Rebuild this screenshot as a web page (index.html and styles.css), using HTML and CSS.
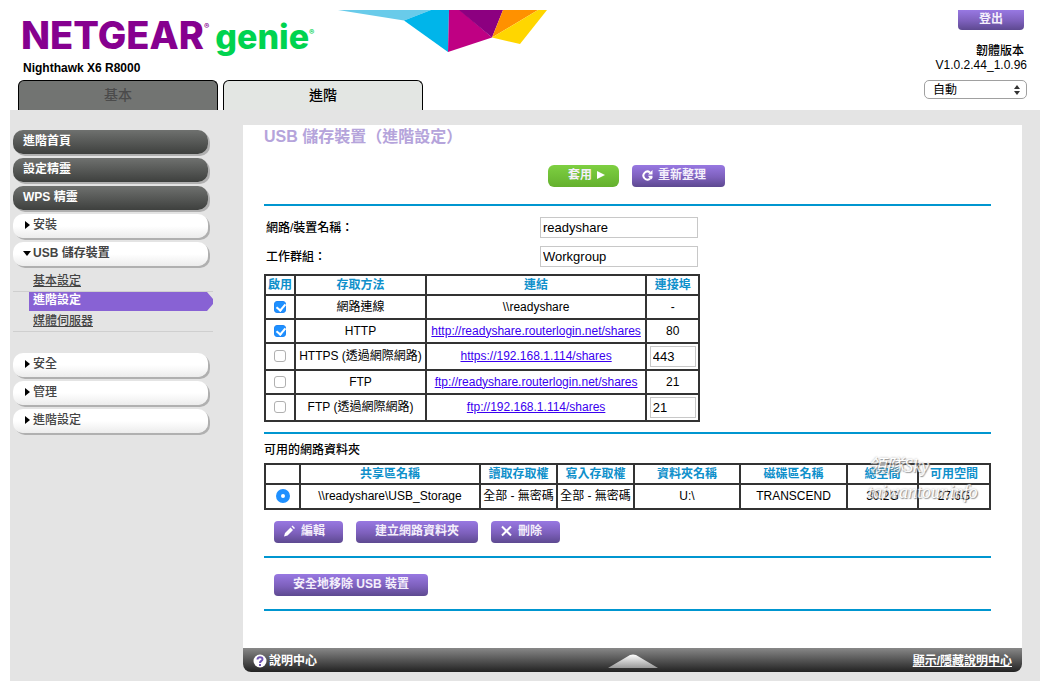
FILE: index.html
```html
<!DOCTYPE html>
<html lang="zh-Hant">
<head>
<meta charset="utf-8">
<title>NETGEAR genie - Nighthawk X6 R8000</title>
<link rel="stylesheet" href="styles.css">
</head>
<body>
<header class="top">
  <div class="top-left">
    <div class="brand-row">
      <div class="brand">
        <span class="brand-name">NETGEAR<sup>®</sup></span>
        <span class="brand-sub">genie<sup>®</sup></span>
      </div>
      <svg class="ribbon" width="210" height="42" viewBox="0 0 210 42" aria-hidden="true">
        <path fill="#69cbea" d="M0 0H93L66 10.500Z"/>
        <path fill="#00b5ea" d="M93 0H111L110 42L66 10.500Z"/>
        <path fill="#bf0083" d="M111 0H122L154 27.500L110 42Z"/>
        <path fill="#8c0080" d="M121 0H165L154 27.500Z"/>
        <path fill="#ff9100" d="M165 0H200L154 27.500Z"/>
        <path fill="#ffd600" d="M200 0H209L182 34L154 27.500Z"/>
      </svg>
    </div>
    <div class="model">Nighthawk X6 R8000</div>
    <nav class="tabs">
      <button type="button" class="tab">基本</button>
      <button type="button" class="tab tab-active">進階</button>
    </nav>
  </div>
  <div class="top-right">
    <button type="button" class="btn btn-logout">登出</button>
    <div class="firmware"><span class="firmware-label">韌體版本</span><span>V1.0.2.44_1.0.96</span></div>
    <div class="select-wrap">
      <select class="language" aria-label="語言"><option>自動</option></select>
      <svg class="select-arrows" width="6" height="10" viewBox="0 0 6 10" aria-hidden="true"><path fill="#333" d="M3 0L6 4H0ZM0 6H6L3 10Z"/></svg>
    </div>
  </div>
</header>
<div class="body">
  <nav class="side">
    <button type="button" class="item item-dark">進階首頁</button>
    <button type="button" class="item item-dark">設定精靈</button>
    <button type="button" class="item item-dark">WPS 精靈</button>
    <button type="button" class="item"><svg class="caret" width="8" height="8" viewBox="0 0 8 8"><path d="M2 0L7 4L2 8Z"/></svg>安裝</button>
    <button type="button" class="item item-open"><svg class="caret" width="8" height="8" viewBox="0 0 8 8"><path d="M0 2H8L4 7Z"/></svg>USB 儲存裝置</button>
    <ul class="sub">
      <li class="sub-item"><a href="#basic">基本設定</a></li>
      <li class="sub-item sub-active"><a href="#advanced">進階設定</a></li>
      <li class="sub-item"><a href="#media">媒體伺服器</a></li>
    </ul>
    <button type="button" class="item"><svg class="caret" width="8" height="8" viewBox="0 0 8 8"><path d="M2 0L7 4L2 8Z"/></svg>安全</button>
    <button type="button" class="item"><svg class="caret" width="8" height="8" viewBox="0 0 8 8"><path d="M2 0L7 4L2 8Z"/></svg>管理</button>
    <button type="button" class="item"><svg class="caret" width="8" height="8" viewBox="0 0 8 8"><path d="M2 0L7 4L2 8Z"/></svg>進階設定</button>
  </nav>
  <main class="panel">
    <div class="content">
      <h1 class="title">USB 儲存裝置（進階設定）</h1>
      <div class="actions">
        <button type="button" class="btn btn-apply">套用<svg width="8" height="8" viewBox="0 0 8 8" aria-hidden="true"><path fill="#fff" d="M0 0L8 4L0 8Z"/></svg></button>
        <button type="button" class="btn btn-icon btn-refresh"><svg width="11" height="11" viewBox="0 0 11 11" aria-hidden="true"><path fill="none" stroke="#fff" stroke-width="2" d="M8 2.500A4 4 0 1 0 8 8.700"/><path fill="#fff" d="M10.500 0V4.500H6ZM6 5.800H10.500V8L9 9.500L7.500 8Z"/></svg>重新整理</button>
      </div>
      <section class="section">
        <div class="field"><label for="device">網路/裝置名稱：</label><input id="device" class="text" type="text" value="readyshare"></div>
        <div class="field"><label for="group">工作群組：</label><input id="group" class="text" type="text" value="Workgroup"></div>
        <table class="grid access">
          <colgroup><col class="c-on"><col class="c-method"><col><col class="c-port"></colgroup>
          <thead><tr><th>啟用</th><th>存取方法</th><th>連結</th><th>連接埠</th></tr></thead>
          <tbody>
            <tr><td><input type="checkbox" aria-label="網路連線" checked></td><td>網路連線</td><td>\\readyshare</td><td>-</td></tr>
            <tr><td><input type="checkbox" aria-label="HTTP" checked></td><td>HTTP</td><td><a href="#http">http://readyshare.routerlogin.net/shares</a></td><td>80</td></tr>
            <tr class="tall"><td><input type="checkbox" aria-label="HTTPS"></td><td>HTTPS (透過網際網路)</td><td><a href="#https">https://192.168.1.114/shares</a></td><td><input class="text port" type="text" aria-label="HTTPS 連接埠" value="443"></td></tr>
            <tr><td><input type="checkbox" aria-label="FTP"></td><td>FTP</td><td><a href="#ftp">ftp://readyshare.routerlogin.net/shares</a></td><td>21</td></tr>
            <tr class="tall"><td><input type="checkbox" aria-label="FTP 透過網際網路"></td><td>FTP (透過網際網路)</td><td><a href="#ftp-wan">ftp://192.168.1.114/shares</a></td><td><input class="text port" type="text" aria-label="FTP 連接埠" value="21"></td></tr>
          </tbody>
        </table>
      </section>
      <section class="section folders">
        <h2 class="subtitle">可用的網路資料夾</h2>
        <div class="folder-table">
          <table class="grid">
            <colgroup><col class="c-pick"><col><col class="c-perm"><col class="c-perm"><col class="c-name"><col class="c-volume"><col class="c-total"><col class="c-free"></colgroup>
            <thead><tr><th></th><th>共享區名稱</th><th>讀取存取權</th><th>寫入存取權</th><th>資料夾名稱</th><th>磁碟區名稱</th><th>總空間</th><th>可用空間</th></tr></thead>
            <tbody><tr class="share"><td><input type="radio" name="share" aria-label="USB_Storage" checked></td><td>\\readyshare\USB_Storage</td><td>全部 - 無密碼</td><td>全部 - 無密碼</td><td>U:\</td><td>TRANSCEND</td><td>30.2G</td><td>27.6G</td></tr></tbody>
          </table>
          <div class="stamp"><span>領隊Sky</span><span>taiwantour.info</span></div>
        </div>
        <div class="buttons">
          <button type="button" class="btn btn-icon btn-small"><svg width="12" height="12" viewBox="0 0 12 12" aria-hidden="true"><path fill="#fff" d="M0 11.500L1 8L6.500 2.500L9 5L3.500 10.500ZM7.500 1.500L8.500 .5L11 3L10 4Z"/></svg>編輯</button>
          <button type="button" class="btn btn-create">建立網路資料夾</button>
          <button type="button" class="btn btn-icon btn-small"><svg width="12" height="12" viewBox="0 0 12 12" aria-hidden="true"><path fill="none" stroke="#fff" stroke-width="2" d="M1 1.500L10 10.500M10 1.500L1 10.500"/></svg>刪除</button>
        </div>
      </section>
      <section class="section eject">
        <button type="button" class="btn btn-eject">安全地移除 USB 裝置</button>
      </section>
    </div>
    <footer class="help">
      <a class="help-link" href="#help"><svg width="14" height="14" viewBox="0 0 14 14" aria-hidden="true"><circle cx="7" cy="7" r="6.500" fill="#fff"/><path fill="none" stroke="#6f55b5" stroke-width="2" d="M4.500 5.500C4.500 2.500 9.500 2.500 9.500 5.200C9.500 7 7 6.800 7 9"/><path fill="#6f55b5" d="M6 10H8V12H6Z"/></svg>說明中心</a>
      <svg width="50" height="14" viewBox="0 0 50 14" aria-hidden="true"><defs><linearGradient id="rise" x2="0" y2="1"><stop stop-color="#fff"/><stop offset="1" stop-color="#999"/></linearGradient></defs><path fill="url(#rise)" d="M0 14L22 1Q25 0 28 1L50 14Z"/></svg>
      <a class="help-toggle" href="#toggle">顯示/隱藏說明中心</a>
    </footer>
  </main>
</div>
</body>
</html>
```
FILE: styles.css
```css
* { box-sizing: border-box; }

body {
  margin: 0;
  padding: 10px;
  background: #fff;
  color: #000;
  font: 12px/16px "Liberation Sans", "Noto Sans CJK TC", sans-serif;
}

button, input, select { font: inherit; margin: 0; }
button { cursor: pointer; border: 0; }

/* Header */
.top { display: flex; justify-content: space-between; height: 100px; }
.top-left { display: flex; flex-direction: column; }
.brand-row { display: flex; height: 50px; }
.brand {
  display: flex;
  gap: 6px;
  width: 328px;
  padding-left: 11px;
  font-family: Inter, sans-serif;
  font-weight: 800;
  white-space: nowrap;
}
.brand sup { font-size: 8px; line-height: 8px; vertical-align: top; position: relative; top: 12px; font-weight: 700; }
.brand-name { color: #86008f; font-size: 38px; line-height: 50px; }
.brand-sub { color: #00d34f; font-size: 34px; line-height: 54px; }
.brand-sub sup { top: 18px; }
.ribbon { display: block; flex: none; }
.model { height: 20px; padding-left: 13px; font-weight: 700; }
.tabs { display: flex; gap: 5px; padding-left: 8px; }
.tab {
  width: 200px;
  height: 30px;
  padding: 0 0 2px;
  border: 1px solid #000;
  border-bottom: 0;
  border-radius: 6px 6px 0 0;
  background: #727472;
  color: #4b4b4b;
  font-size: 14px;
  font-weight: 500;
}
.tab-active { background: #e3e6e3; color: #000; }
.top-right { display: flex; flex-direction: column; align-items: flex-end; padding-right: 13px; }
.firmware { display: flex; flex-direction: column; align-items: flex-end; margin: 14px 0 8px; line-height: 14px; }
.firmware-label { padding-right: 3px; font-weight: 500; }
.select-wrap { position: relative; width: 103px; }
.language {
  appearance: none;
  display: block;
  width: 100%;
  height: 19px;
  padding: 0 8px;
  border: 1px solid #a0a0a0;
  border-radius: 5px;
  background: #fff;
  color: #000;
  line-height: 16px;
}
.select-arrows { position: absolute; right: 7px; top: 5px; pointer-events: none; }

/* Buttons */
.btn {
  display: inline-flex;
  align-items: center;
  justify-content: center;
  gap: 6px;
  height: 22px;
  padding: 0 0 2px;
  border-radius: 4px;
  background: linear-gradient(#9878e2, #7d60bc 55%, #5d4990);
  color: #f4effb;
  font-weight: 700;
  white-space: nowrap;
}
.btn-icon { justify-content: flex-start; padding-left: 10px; gap: 5px; }
.btn-logout { width: 66px; height: 20px; border-radius: 0 0 4px 4px; margin-right: 3px; }
.btn-apply { width: 71px; padding-left: 6px; gap: 5px; border-radius: 6px; background: linear-gradient(#7ed041, #64b02e); }
.btn-refresh { width: 93px; }
.btn-small { width: 69px; }
.btn-create { width: 122px; }
.btn-eject { width: 154px; }

/* Page body */
.body { display: flex; align-items: flex-start; padding: 15px 18px 9px 3px; background: #e4e4e4; }

/* Sidebar */
.side { flex: none; width: 200px; margin-right: 30px; padding-top: 5px; }
.item {
  display: flex;
  align-items: flex-start;
  width: 195px;
  height: 24px;
  margin-bottom: 4px;
  padding: 3px 10px;
  border-radius: 10px;
  background: linear-gradient(#fff 50%, #ececec);
  box-shadow: 2px 2px 0 #b0b0b0;
  color: #444;
  font-weight: 500;
  text-align: left;
}
.item-dark { background: linear-gradient(#6f716f, #3e403e); color: #fff; font-weight: 700; }
.item-open { font-weight: 700; }
.caret { margin: 4px 2px 0 0; }
.sub { margin: 5px 0 21px; padding: 0; list-style: none; }
.sub-item { height: 21px; padding: 2px 0 0 20px; border-bottom: 1px solid #cfcfcf; }
.sub-item a { color: #444; font-weight: 500; }
.sub-active {
  height: 19px;
  margin-left: 16px;
  padding: 0 0 0 4px;
  border: 0;
  background: #8862d4;
  clip-path: polygon(0 0, 178px 0, 100% 7px, 100% 12px, 178px 100%, 0 100%);
}
.sub-active a { color: #fff; font-weight: 700; text-decoration: none; line-height: 14px; }

/* Main panel */
.panel { flex: 1; min-width: 0; border-radius: 0 0 8px 8px; background: #fff; overflow: hidden; }
.content { padding: 0 31px 37px 21px; }
.title { height: 40px; margin: 0; color: #b5a4db; font-size: 16px; line-height: 24px; font-weight: 700; }
.actions { display: flex; justify-content: center; gap: 13px; height: 39px; padding-left: 18px; }
.section { border-top: 2px solid #0096d0; }
.field { display: flex; align-items: center; height: 21px; margin-bottom: 8px; padding-left: 2px; font-weight: 500; }
.field:first-child { margin-top: 11px; }
.field:nth-child(2) { margin-bottom: 7px; }
.field label { width: 274px; }
.text { width: 158px; height: 21px; padding: 0 2px; border: 1px solid #c8c8c8; border-radius: 0; background: #fff; color: #000; font-size: 13px; font-weight: 400; }
.grid { width: 100%; border-collapse: collapse; table-layout: fixed; }
.access { width: 60%; margin-bottom: 10px; }
.grid th, .grid td { height: 24px; padding: 0 0 1px; border: 2px solid #333; text-align: center; white-space: nowrap; line-height: 16px; }
.grid th { height: 20px; color: #0f90cb; font-weight: 700; }
.grid .tall td { height: 27px; }
.grid .share td { height: 25px; }
.grid a { color: #3a00f0; }
.c-on { width: 30px; }
.c-method { width: 131px; }
.c-port { width: 53px; }
.c-pick { width: 35px; }
.c-perm { width: 77px; }
.c-name { width: 106px; }
.c-volume { width: 107px; }
.c-total { width: 71px; }
.c-free { width: 72px; }
.port { display: block; width: 46px; margin: 0 auto; }

input[type="checkbox"], input[type="radio"] { appearance: none; display: block; width: 12px; height: 12px; margin: 0 auto; border: 1px solid #b0b0b0; border-radius: 3px; background: #fff; }
input[type="checkbox"]:checked { border-color: #1e86f5; background: #1e90ff; }
input[type="checkbox"]:checked::before { content: ""; display: block; width: 4px; height: 7px; margin: 0 0 0 3px; border: solid #fff; border-width: 0 2px 2px 0; transform: rotate(40deg); }
input[type="radio"] { width: 14px; height: 14px; border: 5px solid #1e90ff; border-radius: 50%; }

.subtitle { margin: 8px 0 5px; font-size: 12px; line-height: 16px; font-weight: 500; }
.folder-table { position: relative; }
.stamp {
  position: absolute;
  top: -10px;
  right: 10px;
  display: flex;
  flex-direction: column;
  width: 113px;
  color: #fff;
  font: italic 18px/26px "Liberation Serif", "Noto Sans CJK TC", serif;
  text-shadow: 1px 1px 1px #777, 0 0 2px #999;
  opacity: 0.8;
  pointer-events: none;
}
.buttons { display: flex; gap: 13px; padding: 11px 10px 13px; }
.eject { padding: 16px 10px 13px; border-bottom: 2px solid #0096d0; }
.eject .btn { display: flex; }

/* Help bar */
.help { display: grid; grid-template-columns: 1fr auto 1fr; align-items: center; height: 24px; padding: 2px 10px 0; background: linear-gradient(#888, #555 50%, #222); color: #fff; font-weight: 700; }
.help a { color: #fff; }
.help-link { display: flex; align-items: center; gap: 2px; text-decoration: none; }
.help-toggle { justify-self: end; }
```
